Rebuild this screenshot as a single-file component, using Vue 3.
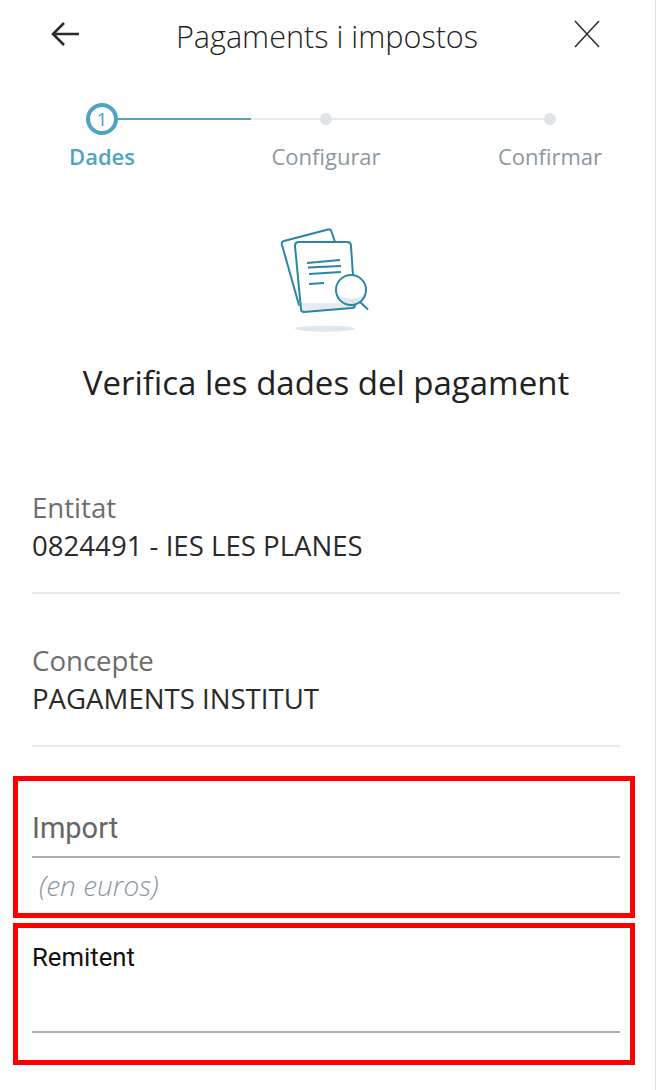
<script setup>
const steps = [
  { label: 'Dades', active: true },
  { label: 'Configurar' },
  { label: 'Confirmar' }
]
const fields = [
  { label: 'Entitat', value: '0824491 - IES LES PLANES' },
  { label: 'Concepte', value: 'PAGAMENTS INSTITUT' }
]
</script>

<template>
  <div class="page">
    <header class="topbar">
      <svg class="back" width="30" height="26" viewBox="0 0 30 26" fill="none" stroke="#2b2b2b" stroke-width="2.6">
        <path d="M29 13H3M14 2 3 13l11 11" />
      </svg>
      <h1>Pagaments i impostos</h1>
      <svg class="close" width="26" height="28" viewBox="0 0 26 28" fill="none" stroke="#2b2b2b" stroke-width="1.5">
        <path d="M1 1l24 26M25 1 1 27" />
      </svg>
    </header>

    <div class="stepper">
      <div class="track">
        <span class="circle">1</span>
        <span class="line on"></span>
        <span class="line off first"></span>
        <span class="dot"></span>
        <span class="line off"></span>
        <span class="dot"></span>
      </div>
      <div class="labels">
        <span v-for="s in steps" :key="s.label" :class="{ active: s.active }">{{ s.label }}</span>
      </div>
    </div>

    <svg class="illus" width="100" height="110" viewBox="0 0 100 110" fill="none">
      <ellipse cx="49" cy="102.7" rx="30" ry="3" fill="#dce8ec" />
      <path d="M8 15 52 3.500c2-.5 3 .5 3.500 2L61 22 24 79 23 79 6 19c-.5-2 0-3.500 2-4Z" fill="#fff" stroke="#2a86a4" stroke-width="2" stroke-linejoin="round" />
      <path d="M19 20c0-3 2-4 4-4h48c3 0 4 2 4 4l4 59c0 2-1 3-3 3l-48 4c-2 0-3-1-3-3Z" fill="#fff" />
      <path d="M23 77 25 84c.5 2 1 2 3 2l48-4c2 0 3-1 3-3v-2Z" fill="#e6ecef" />
      <path d="M19 20c0-3 2-4 4-4h48c3 0 4 2 4 4l4 59c0 2-1 3-3 3l-48 4c-2 0-3-1-3-3Z" stroke="#2a86a4" stroke-width="2" />
      <path d="M31 37 64 34M32 41.500 65 40M33 48 65 46M33 58 48 57" stroke="#2a86a4" stroke-width="2" />
      <circle cx="75" cy="64" r="15" fill="#fff" />
      <path d="M60.500 67c4 7 23 8 29 0-1 7-7 12-14.500 12s-13.500-5-14.500-12Z" fill="#dfe7ea" />
      <circle cx="75" cy="64" r="15" stroke="#2a86a4" stroke-width="2" />
      <path d="M84 76 92 83.500" stroke="#2a86a4" stroke-width="2" />
    </svg>

    <h2>Verifica les dades del pagament</h2>

    <div class="readonly">
      <div v-for="f in fields" :key="f.label" class="field">
        <div class="label">{{ f.label }}</div>
        <div class="value">{{ f.value }}</div>
      </div>
    </div>

    <section class="frame import">
      <div class="input-label">Import</div>
      <div class="hint">(en euros)</div>
    </section>
    <section class="frame remitent">
      <div class="input-title">Remitent</div>
      <div class="input-line"></div>
    </section>
  </div>
</template>

<style>
html, body { margin: 0; background: #fff; }
</style>

<style scoped>
.page {
  width: 656px;
  height: 1090px;
  box-sizing: border-box;
  padding-right: 3px;
  border-right: 1px solid #dedede;
  background: #fff;
  font-family: "Open Sans", sans-serif;
  display: flex;
  flex-direction: column;
  overflow: hidden;
}
.topbar {
  display: flex;
  align-items: center;
  justify-content: space-between;
  padding: 15px 52px 0 50px;
  height: 53px;
  box-sizing: border-box;
  flex: none;
}
.topbar h1 {
  margin: 0;
  font-weight: 300;
  font-size: 30.6px;
  line-height: 36px;
  color: #1f1f1f;
  position: relative;
  top: 2px;
}
.stepper { margin-top: 50px; flex: none; }
.track {
  display: flex;
  align-items: center;
  padding-left: 86px;
  height: 32px;
}
.circle {
  width: 32px;
  height: 32px;
  box-sizing: border-box;
  border: 4px solid #4ea3c2;
  border-radius: 50%;
  color: #4ea3c2;
  font-size: 19px;
  line-height: 24px;
  text-align: center;
  flex: none;
}
.line { height: 2px; }
.line.on { width: 133px; background: #4ea3c2; }
.line.off { background: #e8ebee; }
.line.first { width: 69px; }
.line.off:not(.first) { width: 212px; }
.dot {
  width: 12px;
  height: 12px;
  border-radius: 50%;
  background: #dfe3e7;
  flex: none;
}
.labels {
  height: 32px;
  margin: 8px 0 0 -10px;
  font-size: 22px;
  line-height: 27px;
  color: #8b97a1;
  display: grid;
  grid-template-columns: repeat(3, 224px);
  text-align: center;
  white-space: nowrap;
}
.labels .active { color: #4ea3c2; font-weight: 600; }
.illus { align-self: center; margin-top: 51px; flex: none; }
h2 {
  margin: 25px 0 0;
  text-align: center;
  font-weight: 400;
  font-size: 33px;
  line-height: 44px;
  color: #222;
  flex: none;
}
.readonly { padding: 0 32px; margin-top: 84px; flex: none; }
.field {
  box-sizing: border-box;
  border-bottom: 2px solid #e6eaec;
  height: 105px;
  margin-bottom: 48px;
}
.field:last-child { margin-bottom: 0; }
.label { color: #6d6d6d; line-height: 36px; font-size: 27.6px; }
.value { color: #2a2a2a; line-height: 41px; font-size: 27.6px; }
.frame {
  box-sizing: border-box;
  width: 622px;
  margin-left: 13px;
  height: 142px;
  border: 5px solid #ff0000;
  padding: 0 10px 0 14px;
  flex: none;
}
.import { margin-top: 29px; }
.remitent { margin-top: 5px; }
.input-label {
  font-family: Roboto, sans-serif;
  font-size: 29px;
  line-height: 40px;
  color: #666;
  padding-top: 27px;
  border-bottom: 2px solid #a6b0b5;
  height: 77px;
  box-sizing: border-box;
}
.hint {
  font-style: italic;
  font-weight: 300;
  font-size: 28px;
  line-height: 36px;
  color: #8a97a0;
  padding: 9px 0 0 7px;
}
.input-title {
  font-family: Roboto, sans-serif;
  font-size: 25.700px;
  line-height: 32px;
  color: #111;
  padding-top: 13px;
}
.input-line {
  margin-top: 58px;
  border-bottom: 2px solid #a6b0b5;
}
</style>
